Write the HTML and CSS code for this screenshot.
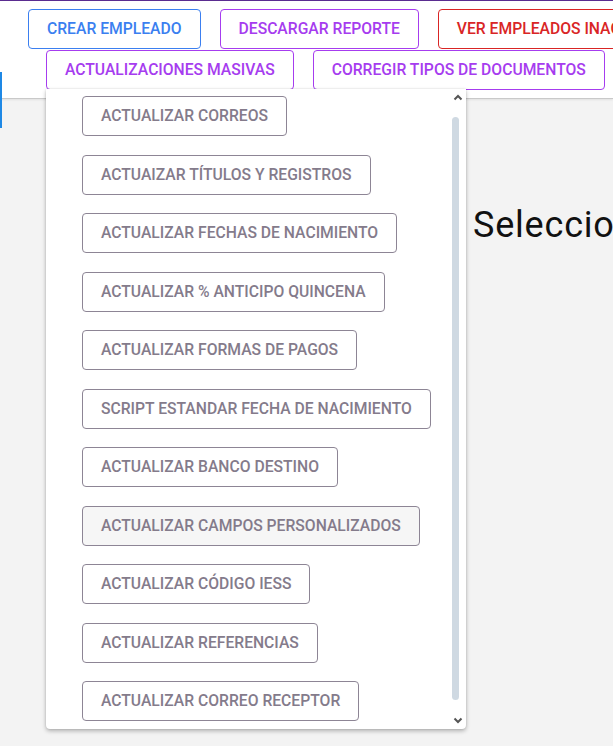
FILE: index.html
```html
<!DOCTYPE html>
<html lang="es">
<head>
<meta charset="utf-8">
<title>Empleados</title>
<link rel="stylesheet" href="styles.css">
</head>
<body>
<div class="topline"></div>
<header class="toolbar">
  <div class="row row-1">
    <button class="btn btn-blue">Crear empleado</button>
    <button class="btn btn-purple">Descargar reporte</button>
    <button class="btn btn-red">Ver empleados inactivos</button>
  </div>
  <div class="row row-2">
    <button class="btn btn-purple">Actualizaciones masivas</button>
    <button class="btn btn-purple">Corregir tipos de documentos</button>
  </div>
</header>
<div class="side-mark"></div>
<main class="content">
  <h1 class="title">Seleccione una opción</h1>
</main>

<div class="menu">
  <div class="menu-list">
    <button class="item">Actualizar correos</button>
    <button class="item">Actuaizar títulos y registros</button>
    <button class="item">Actualizar fechas de nacimiento</button>
    <button class="item">Actualizar % anticipo quincena</button>
    <button class="item">Actualizar formas de pagos</button>
    <button class="item">Script estandar fecha de nacimiento</button>
    <button class="item">Actualizar banco destino</button>
    <button class="item item-hover">Actualizar campos personalizados</button>
    <button class="item">Actualizar código IESS</button>
    <button class="item">Actualizar referencias</button>
    <button class="item">Actualizar correo receptor</button>
  </div>
  <div class="scrollbar">
    <svg class="arrow arrow-up" width="10" height="7" viewBox="0 0 10 7"><path d="M1.5 5.5 L5 2 L8.5 5.5" fill="none" stroke="#555" stroke-width="2"/></svg>
    <div class="thumb"></div>
    <svg class="arrow arrow-down" width="10" height="7" viewBox="0 0 10 7"><path d="M1.5 1.5 L5 5 L8.5 1.5" fill="none" stroke="#555" stroke-width="2"/></svg>
  </div>
</div>
</body>
</html>
```

FILE: styles.css
```css
* { box-sizing: border-box; }

html, body {
  margin: 0;
  padding: 0;
}

body {
  width: 613px;
  height: 746px;
  overflow: hidden;
  background: #f3f3f3;
  font-family: Roboto, "Liberation Sans", sans-serif;
  position: relative;
}

.topline {
  height: 1px;
  background: #5b2d91;
}

.toolbar {
  background: #ffffff;
  height: 98px;
  border-bottom: 1px solid #c9c9c9;
  box-shadow: 0 1px 2px rgba(0,0,0,0.08);
  padding-top: 8px;
}

.row {
  display: flex;
  flex-wrap: nowrap;
  gap: 19px;
  white-space: nowrap;
}

.row-1 { padding-left: 28px; }
.row-2 { padding-left: 46px; margin-top: 1px; }

.btn {
  flex: none;
  height: 40px;
  padding: 0 18px;
  background: #ffffff;
  border: 1px solid;
  border-radius: 4px;
  font-family: Roboto, "Liberation Sans", sans-serif;
  font-size: 15.7px;
  font-weight: 500;
  text-transform: uppercase;
  line-height: 38px;
}

.btn-blue { color: #3b7ff0; border-color: #3b7ff0; }
.btn-purple { color: #a63cef; border-color: #a63cef; }
.btn-red { color: #d92525; border-color: #d92525; }

.side-mark {
  position: absolute;
  left: 0;
  top: 72px;
  width: 2px;
  height: 56px;
  background: #1e88e5;
}

.content {
  padding-left: 473px;
  padding-top: 105px;
}

.title {
  margin: 0;
  font-size: 36px;
  font-weight: 400;
  letter-spacing: 0.8px;
  color: #111111;
  white-space: nowrap;
  line-height: normal;
}

.menu {
  position: absolute;
  left: 46px;
  top: 89px;
  width: 420px;
  height: 640px;
  background: #ffffff;
  border-radius: 0 0 4px 4px;
  box-shadow: 0 2px 4px rgba(0,0,0,0.28), 0 0 2px rgba(0,0,0,0.12);
}

.menu-list {
  display: flex;
  flex-direction: column;
  align-items: flex-start;
  gap: 18.5px;
  padding: 7px 0 0 36px;
}

.item {
  flex: none;
  height: 40px;
  padding: 0 18px;
  background: #ffffff;
  border: 1px solid #8d8595;
  border-radius: 4px;
  color: #847b8b;
  font-family: Roboto, "Liberation Sans", sans-serif;
  font-size: 15.7px;
  font-weight: 500;
  text-transform: uppercase;
  white-space: nowrap;
  line-height: 38px;
}

.item-hover { background: #f6f6f6; }

.scrollbar {
  position: absolute;
  top: 0;
  right: 0;
  width: 16px;
  height: 100%;
}

.arrow {
  position: absolute;
  left: 3px;
}

.arrow-up { top: 5px; }
.arrow-down { top: 628px; }

.thumb {
  position: absolute;
  left: 2px;
  top: 28px;
  width: 7px;
  height: 583px;
  border-radius: 4px;
  background: #cfd9e2;
}
```
